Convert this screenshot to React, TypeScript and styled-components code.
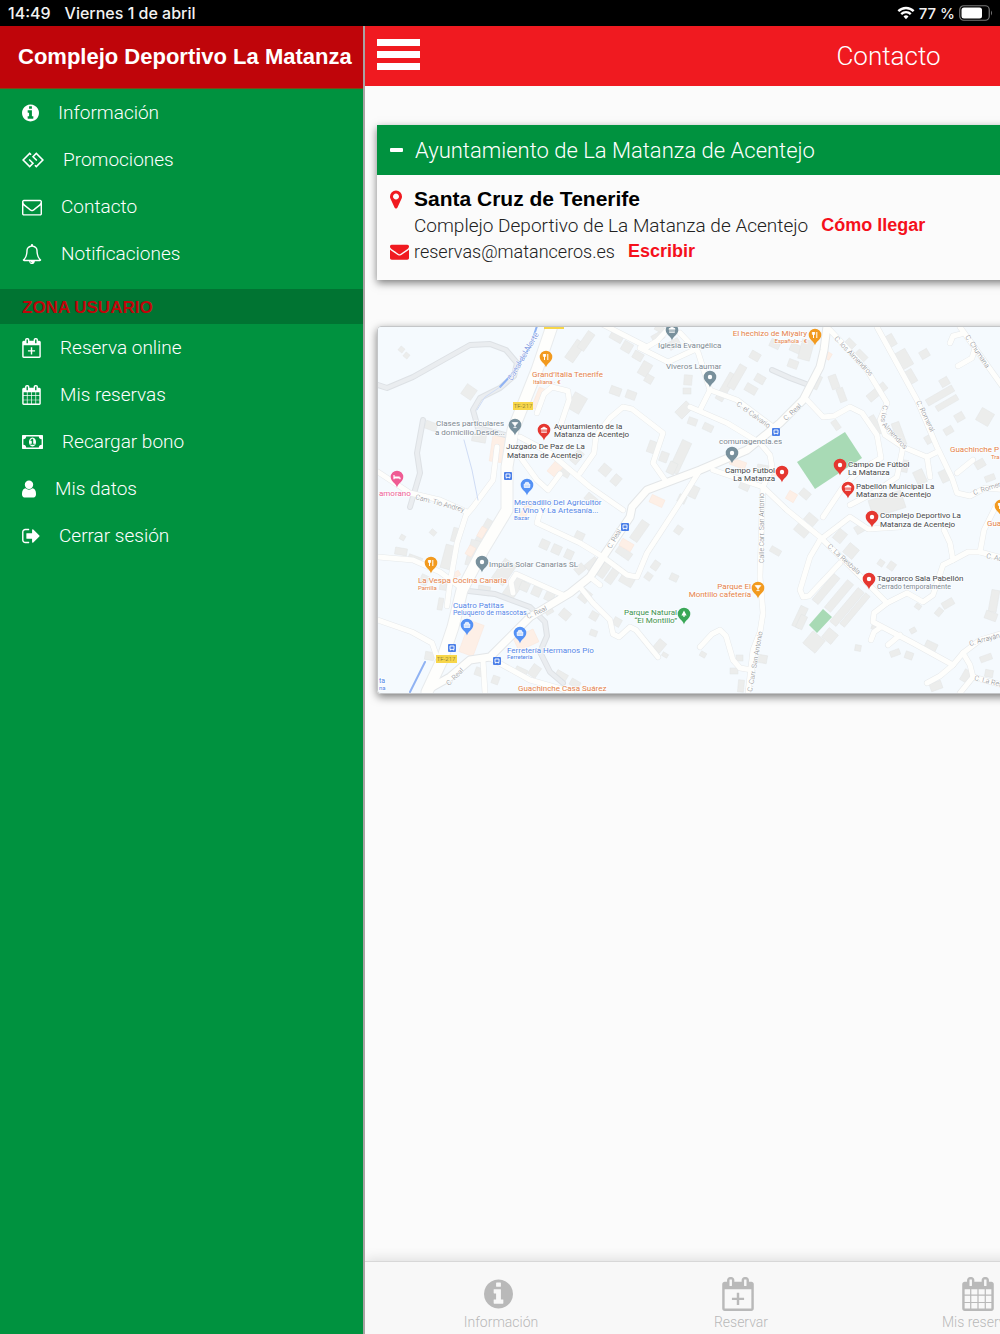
import React from 'react';
import styled, { createGlobalStyle } from 'styled-components';
import { FaGg } from 'react-icons/fa';

const color = {
  red: '#f01a20',
  darkRed: '#bf050a',
  link: '#f5101b',
  green: '#00923f',
  darkGreen: '#007432',
  page: '#fbfbfb',
  tab: '#b9b9b9',
};

const light = 'Roboto, "Liberation Sans", sans-serif';
const bold = '"Liberation Sans", Arial, sans-serif';

const GlobalStyle = createGlobalStyle`
  *, *::before, *::after { box-sizing: border-box; }
  body { margin: 0; background: ${color.page}; font-family: ${light}; font-weight: 300; }
  ul, h1, h2, h3, p { margin: 0; padding: 0; }
  ul { list-style: none; }
  button { border: 0; padding: 0; background: none; font: inherit; color: inherit; cursor: pointer; }
  a { text-decoration: none; color: inherit; }
`;

const Page = styled.div`
  display: flex;
  flex-direction: column;
  min-height: 100vh;
  overflow: hidden;
`;

const StatusBar = styled.div`
  display: flex;
  align-items: center;
  gap: 14px;
  height: 26px;
  padding: 0 7px 0 8px;
  background: #000;
  color: #f2f2f2;
  font-family: Inter, sans-serif;
  font-weight: 500;
  font-size: 16px;
`;

const StatusRight = styled.div`
  display: flex;
  align-items: center;
  gap: 4px;
  margin-left: auto;
  font-size: 15px;
  svg { display: block; }
`;

const Shell = styled.div`
  display: flex;
  flex: 1;
`;

const Sidebar = styled.aside`
  flex: 0 0 365px;
  z-index: 1;
  border-right: 2px solid #a9a3a3;
  background: ${color.green};
  color: #fff;
`;

const Brand = styled.h1`
  display: flex;
  align-items: center;
  height: 63px;
  padding: 0 6px 0 18px;
  border-bottom: 1px solid #7c4a12;
  background: ${color.darkRed};
  font: bold 22px ${bold};
  white-space: nowrap;
`;

const Menu = styled.ul<{ $spaced?: boolean }>`
  padding-bottom: ${p => (p.$spaced ? 12 : 0)}px;
`;

const MenuLink = styled.a`
  display: flex;
  align-items: center;
  gap: 19px;
  height: 47px;
  padding-left: 22px;
  font-size: 19px;
  svg { flex: none; display: block; }
`;

const Zone = styled.h2`
  height: 35px;
  padding: 0 22px;
  background: ${color.darkGreen};
  color: ${color.darkRed};
  font: bold 17px/37px ${bold};
`;

const Main = styled.main`
  display: flex;
  flex-direction: column;
  flex: 0 0 100%;
`;

const TopBar = styled.header`
  display: flex;
  align-items: center;
  height: 60px;
  padding: 0 8px 0 12px;
  background: ${color.red};
  color: #fff;
`;

const Burger = styled.button`
  display: grid;
  gap: 5px;
  width: 43px;
  margin-bottom: 4px;
`;

const Bar = styled.span`
  height: 7px;
  background: #fff;
`;

const ScreenTitle = styled.h2`
  flex: 1;
  text-align: center;
  font-size: 26px;
  font-weight: 300;
`;

const Content = styled.div`
  display: flex;
  flex-direction: column;
  flex: 1;
  gap: 46px;
  padding: 39px 12px;
`;

const Card = styled.section`
  background: ${color.page};
  box-shadow: 0 3px 8px rgba(0, 0, 0, 0.5);
`;

const CardHead = styled.button`
  display: flex;
  align-items: center;
  gap: 12px;
  width: 100%;
  height: 50px;
  padding-left: 13px;
  background: ${color.green};
  color: #fff;
  font-size: 22px;
  text-align: left;
`;

const Minus = styled.span`
  width: 13px;
  height: 4px;
  border-radius: 1px;
  background: #fff;
`;

const CardBody = styled.div`
  display: grid;
  padding: 11px 13px 16px;
  color: #222;
`;

const Line = styled.div<{ $small?: boolean }>`
  display: grid;
  grid-template-columns: 24px auto auto;
  justify-content: start;
  align-items: center;
  height: 26px;
  font-size: ${p => (p.$small ? 18 : 19)}px;
  svg { display: block; }
`;

const Town = styled.h3`
  color: #000;
  font: bold 21px ${bold};
`;

const ActionLink = styled.a`
  margin-left: 13px;
  color: ${color.link};
  font: bold 18px ${bold};
`;

const MapCard = styled.section`
  overflow: hidden;
  border: 1px solid #c4c6c8;
  border-radius: 4px;
  box-shadow: 0 3px 8px rgba(0, 0, 0, 0.5);
  svg { display: block; width: 100%; height: auto; }
`;

const TabBar = styled.nav`
  display: flex;
  height: 73px;
  padding: 0 27px 0 13px;
  border-top: 1px solid #d8d8d8;
  background: #f8f8f8;
  box-shadow: 0 -2px 12px rgba(0, 0, 0, 0.12);
`;

const Tab = styled.a`
  display: flex;
  flex: 1;
  flex-direction: column;
  align-items: center;
  gap: 2px;
  padding-top: 15px;
  color: ${color.tab};
  font-size: 14px;
  line-height: 18px;
  svg { display: block; }
`;

const TabLabel = styled.span`
  padding-left: 6px;
`;

type GlyphName = 'info' | 'mailOpen' | 'bell' | 'plus' | 'calendar' | 'money' | 'user' | 'exit' | 'pin' | 'mail';

const hooks =
  'M576 448v-288q0-13-9.5-22.5t-22.5-9.5h-64q-13 0-22.5 9.5t-9.5 22.5v288q0 13 9.5 22.5t22.5 9.5h64q13 0 22.5-9.5t9.5-22.5zM1344 448v-288q0-13-9.5-22.5t-22.5-9.5h-64q-13 0-22.5 9.5t-9.5 22.5v288q0 13 9.5 22.5t22.5 9.5h64q13 0 22.5-9.5t9.5-22.5zM1728 384v1280q0 52-38 90t-90 38h-1408q-52 0-90-38t-38-90v-1280q0-52 38-90t90-38h128v-96q0-66 47-113t113-47h64q66 0 113 47t47 113v96h384v-96q0-66 47-113t113-47h64q66 0 113 47t47 113v96h128q52 0 90 38t38 90z';

// [left edge, advance width, outline] on a 1792 unit em
const glyphs: Record<GlyphName, [number, number, string]> = {
  info: [128, 1536, 'M1152 1376v-160q0-14-9-23t-23-9h-96v-512q0-14-9-23t-23-9h-320q-14 0-23 9t-9 23v160q0 14 9 23t23 9h96v320h-96q-14 0-23 9t-9 23v160q0 14 9 23t23 9h448q14 0 23-9t9-23zm-128-896v-160q0-14-9-23t-23-9h-192q-14 0-23 9t-9 23v160q0 14 9 23t23 9h192q14 0 23-9t9-23zm640 416q0 209-103 385.5t-279.5 279.5-385.5 103-385.5-103-279.5-279.5-103-385.5 103-385.5 279.5-279.5 385.5-103 385.5 103 279.5 279.5 103 385.5z'],
  mailOpen: [0, 1792, 'M1664 1504v-768q-32 36-69 66-268 206-426 338-51 43-83 67t-86.5 48.5-102.5 24.5h-2q-48 0-102.5-24.5t-86.5-48.5-83-67q-158-132-426-338-37-30-69-66v768q0 13 9.5 22.5t22.5 9.5h1472q13 0 22.5-9.5t9.5-22.5zm0-1051v-24.5l-.5-13-3-12.5-5.5-9-9-7.5-14-2.5h-1472q-13 0-22.5 9.5t-9.5 22.5q0 168 147 284 193 152 401 317 6 5 35 29.5t46 37.5 44.5 31.5 50.5 27.5 43 9h2q20 0 43-9t50.5-27.5 44.5-31.5 46-37.5 35-29.5q208-165 401-317 54-43 100.5-115.5t46.5-131.5zm128-37v1088q0 66-47 113t-113 47h-1472q-66 0-113-47t-47-113v-1088q0-66 47-113t113-47h1472q66 0 113 47t47 113z'],
  bell: [0, 1792, 'M912 1696q0-16-16-16-59 0-101.5-42.5t-42.5-101.5q0-16-16-16t-16 16q0 73 51.5 124.5t124.5 51.5q16 0 16-16zm-666-288h1300q-266-300-266-832 0-51-24-105t-69-103-121.5-80.5-169.5-31.5-169.5 31.5-121.5 80.5-69 103-24 105q0 532-266 832zm1482 0q0 52-38 90t-90 38h-448q0 106-75 181t-181 75-181-75-75-181h-448q-52 0-90-38t-38-90q50-42 91-88t85-119.5 74.5-158.5 50-206 19.5-260q0-152 117-282.5t307-158.5q-8-19-8-39 0-40 28-68t68-28 68 28 28 68q0 20-8 39 190 28 307 158.5t117 282.5q0 139 19.5 260t50 206 74.5 158.5 85 119.5 91 88z'],
  plus: [64, 1664, hooks + 'M192 1664h1408v-1024h-1408zM832 832h128v256h256v128h-256v256h-128v-256h-256v-128h256z'],
  calendar: [64, 1664, hooks + 'M192 1664h288v-288h-288v288zm352 0h320v-288h-320v288zm-352-352h288v-320h-288v320zm352 0h320v-320h-320v320zm-352-384h288v-288h-288v288zm736 736h320v-288h-320v288zm-384-736h320v-288h-320v288zm768 736h288v-288h-288v288zm-384-352h320v-320h-320v320zm384 0h288v-320h-288v320zm-384-384h320v-288h-320v288zm384 0h288v-288h-288v288z'],
  money: [0, 1920, 'M768 1152h384v-96h-128v-448h-114l-148 137 77 80q42-37 55-57h2v288h-128v96zm512-256q0 70-21 142t-59.5 134-101.5 101-138 39-138-39-101.5-101-59.5-134-21-142 21-142 59.5-134 101.5-101 138-39 138 39 101.5 101 59.5 134 21 142zm512 256v-512q-106 0-181-75t-75-181h-1152q0 106-75 181t-181 75v512q106 0 181 75t75 181h1152q0-106 75-181t181-75zm128-832v1152q0 26-19 45t-45 19h-1792q-26 0-45-19t-19-45v-1152q0-26 19-45t45-19h1792q26 0 45 19t19 45z'],
  user: [256, 1280, 'M1536 1399q0 109-62.5 187t-150.5 78h-854q-88 0-150.5-78t-62.5-187q0-85 8.5-160.5t31.5-152 58.5-131 94-89 134.5-34.5q131 128 313 128t313-128q76 0 134.5 34.5t94 89 58.5 131 31.5 152 8.5 160.5zm-256-887q0 159-112.5 271.5t-271.5 112.5-271.5-112.5-112.5-271.5 112.5-271.5 271.5-112.5 271.5 112.5 112.5 271.5z'],
  exit: [64, 1600, 'M704 1440q0 4 1 20t.5 26.5-3 23.5-10 19.5-20.5 6.5h-320q-119 0-203.5-84.5t-84.5-203.5v-704q0-119 84.5-203.5t203.5-84.5h320q13 0 22.5 9.5t9.5 22.5q0 4 1 20t.5 26.5-3 23.5-10 19.5-20.5 6.5h-320q-66 0-113 47t-47 113v704q0 66 47 113t113 47h312l11.5 1 11.5 3 8 5.5 7 9 2 13.5zm928-544q0 26-19 45l-544 544q-19 19-45 19t-45-19-19-45v-288h-448q-26 0-45-19t-19-45v-384q0-26 19-45t45-19h448v-288q0-26 19-45t45-19 45 19l544 544q19 19 19 45z'],
  pin: [384, 1024, 'M1152 640q0-106-75-181t-181-75-181 75-75 181 75 181 181 75 181-75 75-181zm256 0q0 109-33 179l-364 774q-16 33-47.5 52t-67.5 19-67.5-19-46.5-52l-365-774q-33-70-33-179 0-212 150-362t362-150 362 150 150 362z'],
  mail: [0, 1792, 'M1792 710v794q0 66-47 113t-113 47h-1472q-66 0-113-47t-47-113v-794q44 49 101 87 362 246 497 345 57 42 92.5 65.5t94.5 48 110 24.5h2q51 0 110-24.5t94.5-48 92.5-65.5q170-123 498-345 57-39 100-87zm0-294q0 79-49 151t-122 123q-376 261-468 325-10 7-42.5 31t-54 38.5-52 32.5-57.5 27-50 9h-2q-23 0-50-9t-57.5-27-52-32.5-54-38.5-42.5-31q-91-64-262-182.5t-205-142.5q-62-42-117-115.5t-55-136.5q0-78 41.5-130t118.5-52h1472q65 0 112.5 47t47.5 113z'],
};

// glyphs whose body is filled keep a solid silhouette
const solid: GlyphName[] = ['user', 'exit'];

function Glyph({ name, size = 20, fill = 'currentColor' }: { name: GlyphName; size?: number; fill?: string }) {
  const [left, width, d] = glyphs[name];
  return (
    <svg
      width={Math.round((size * width) / 1792)}
      height={size}
      viewBox={`${left} 0 ${width} 1792`}
      fill={fill}
      fillRule={solid.includes(name) ? 'nonzero' : 'evenodd'}
      aria-hidden="true"
    >
      <path d={d} />
    </svg>
  );
}

type Pt = string;
const greyRoads: Pt[] = [
  '378,385 387,388 413,377 470,345 490,344 506,350 517,363 514,376 500,388 480,398 473,410 478,428 513,437',
  '423,420 417,453 420,473 410,507',
  '460,590 495,594 530,607 545,622 547,636 540,652 550,672 563,683',
  '772,370 790,378 806,384',
];
const roads: Pt[] = [
  '378,472 410,493 440,500 467,512 457,543 450,583 447,606',
  '497,447 493,480 473,507 467,514',
  '537,413 544,394 552,387 568,391 569,400 558,433',
  '520,437 550,453 590,487 623,510',
  '513,447 537,480 548,490 560,474',
  '580,473 594,453 596,436 610,418 623,407 632,409 663,433 653,463 667,483',
  '600,323 647,347 657,341 670,327',
  '680,333 698,352 710,390 700,410',
  '640,348 668,362 694,350',
  '710,390 737,400 773,427',
  '690,407 727,423 760,443 770,455 772,467 763,487 762,510 760,577 763,613 760,632 753,650 748,693',
  '700,470 677,507 647,553 637,577 627,575 603,557 580,543 537,523 540,512 550,503',
  '713,470 763,487 787,510 820,537 857,573 887,603 874,613 873,622 913,643 953,665 963,653 980,640 1010,631',
  '820,540 810,557 800,590 803,597 809,596 840,563',
  '820,540 850,517 868,529 900,527',
  '887,603 907,593 923,602 933,595 943,565 953,560 968,552 980,552 1010,560',
  '953,560 950,543 944,530',
  '980,552 984,530 996,506',
  '807,400 823,417 834,416 850,407 862,413 877,435 881,458 860,470 843,487 823,517',
  '830,330 867,370 887,403 880,420 885,435 903,447 927,457 937,452',
  '877,327 917,400 937,447 952,478 957,493 970,496 985,488 1010,490',
  '960,327 1005,390',
  '903,447 897,477 877,491 850,505',
  '927,457 930,477',
  '957,473 973,460',
  '950,343 953,336 961,334',
  '958,366 972,358 975,348',
  '580,587 593,603 610,620 613,634 619,637 630,627 636,630 658,657',
  '700,647 712,634 720,630 726,636 733,660 740,668 752,670',
  '378,557 413,560 440,572 460,587',
  '378,620 412,632 432,643 437,657',
  '513,593 511,582 516,574 563,595',
  '483,660 485,693',
  '490,658 530,680 572,692',
  '590,577 600,585',
  '953,665 940,676 927,683',
  '963,653 970,665 973,677 960,693',
  '973,677 1010,687',
  '881,627 874,632 871,640',
  '900,635 888,645',
];
const mainRoads: Pt[] = [
  '427,690 450,677 470,660 490,657 530,617 570,593 590,577 603,557 630,517 632,507 647,490 700,470 747,450 780,423 803,400 820,367 824,350 827,326',
];
const highway = '552,326 537,370 513,430 507,467 507,510 483,550 462,590 453,627 442,660 427,692';

// [x, y, width, height, rotation]
const buildings: number[][] = [
  [463, 386, 12, 12, 35], [399, 347, 5, 5, 40], [404, 353, 5, 5, 40], [425, 422, 12, 8, 20], [472, 434, 14, 8, 10],
  [568, 396, 18, 14, -60], [570, 340, 10, 22, 35], [582, 331, 8, 20, 35], [555, 465, 16, 10, 30], [573, 450, 8, 14, 40],
  [610, 333, 13, 8, 30], [622, 342, 10, 10, 30], [633, 352, 10, 8, 30], [640, 362, 10, 14, 30], [645, 375, 8, 8, 30],
  [610, 387, 11, 8, 20], [626, 391, 10, 8, 20], [652, 333, 12, 8, -30], [668, 340, 12, 8, -30], [655, 326, 10, 6, 30],
  [684, 375, 8, 10, 5], [683, 388, 8, 6, 0], [676, 405, 16, 10, -45], [688, 418, 9, 7, 20], [703, 424, 10, 7, 25],
  [722, 372, 8, 30, 30], [733, 364, 8, 26, 30], [750, 352, 10, 8, 30], [770, 340, 10, 8, 25], [790, 345, 14, 8, 25],
  [745, 385, 12, 8, 30], [755, 375, 10, 8, 30], [675, 440, 10, 34, 25], [668, 462, 8, 12, 25], [648, 441, 8, 12, 20],
  [660, 452, 8, 10, 20], [600, 465, 10, 10, 40], [612, 475, 8, 10, 40], [585, 495, 12, 8, 40], [690, 486, 8, 12, 25],
  [678, 495, 8, 8, 25], [740, 480, 10, 10, 25], [757, 465, 12, 8, 10], [800, 340, 12, 20, 15], [788, 360, 10, 8, 20],
  [812, 375, 8, 14, 25], [845, 340, 10, 8, 45], [855, 352, 12, 8, 45], [830, 375, 8, 14, -20], [838, 388, 7, 14, -20],
  [866, 388, 22, 8, -40], [898, 350, 12, 18, -30], [905, 370, 10, 14, -30], [885, 335, 10, 12, -30], [925, 392, 30, 7, -30],
  [935, 400, 24, 6, -30], [920, 350, 9, 8, -30], [940, 378, 9, 8, -30], [944, 427, 9, 7, -30], [955, 413, 9, 8, -30],
  [978, 410, 14, 14, 30], [833, 420, 6, 10, -35], [872, 415, 7, 20, -30], [895, 422, 8, 24, -20], [900, 460, 8, 12, 10],
  [915, 470, 10, 14, -25], [925, 435, 9, 8, -30], [940, 470, 9, 12, -25], [975, 460, 10, 8, -30], [985, 475, 10, 6, -20],
  [800, 490, 10, 8, 40], [870, 495, 34, 18, -18], [795, 525, 14, 10, 40], [805, 515, 12, 9, 40], [835, 530, 10, 12, 40],
  [845, 545, 12, 12, 40], [855, 525, 9, 8, -30], [878, 560, 6, 6, 35], [888, 562, 7, 8, 35], [822, 572, 8, 34, 40],
  [835, 578, 8, 36, 40], [843, 585, 8, 44, 40], [852, 590, 6, 40, 40], [796, 606, 8, 22, 25], [806, 634, 16, 16, 40],
  [824, 630, 12, 12, 40], [915, 604, 6, 5, 35], [936, 608, 6, 8, 40], [910, 628, 6, 5, -30], [942, 600, 12, 7, -30],
  [855, 645, 6, 6, 10], [872, 622, 7, 8, 20], [890, 650, 10, 6, -20], [905, 652, 8, 7, 20], [925, 642, 12, 8, 25],
  [930, 682, 12, 8, -20], [962, 670, 8, 12, 30], [980, 655, 12, 6, -20], [985, 670, 8, 7, 10], [990, 590, 8, 22, 10],
  [985, 612, 12, 8, 20], [480, 520, 14, 26, 30], [468, 540, 10, 26, 15], [443, 545, 10, 24, 15], [452, 528, 8, 14, 15],
  [430, 530, 6, 5, 40], [395, 548, 12, 7, 10], [408, 556, 14, 7, 20], [420, 575, 8, 10, 25], [440, 580, 7, 10, 10],
  [438, 598, 5, 12, 10], [497, 560, 14, 24, 35], [508, 575, 12, 24, 35], [478, 586, 12, 9, 10], [520, 582, 9, 9, 25],
  [532, 587, 9, 9, 25], [545, 592, 9, 9, 25], [540, 540, 9, 9, 25], [552, 545, 9, 9, 25], [565, 550, 8, 9, 25],
  [575, 532, 9, 8, 25], [585, 560, 14, 8, -40], [575, 565, 10, 8, -40], [560, 610, 10, 9, 40], [545, 608, 8, 6, -30],
  [580, 590, 10, 12, 40], [600, 562, 8, 16, 35], [608, 568, 8, 16, 35], [620, 575, 14, 10, 30], [616, 549, 16, 8, 35],
  [635, 520, 9, 22, 35], [652, 561, 7, 9, 35], [645, 573, 7, 7, 35], [670, 574, 8, 7, 25], [675, 526, 7, 8, 35],
  [590, 612, 8, 8, 30], [613, 618, 8, 8, 30], [590, 630, 7, 6, 20], [655, 640, 9, 12, 40], [662, 653, 6, 4, 30],
  [770, 548, 11, 6, 30], [798, 615, 7, 14, 25], [758, 655, 9, 8, 10], [736, 655, 7, 6, 0], [730, 668, 8, 6, 0],
  [738, 680, 6, 12, 5], [700, 652, 6, 5, 30], [475, 668, 9, 8, 20], [492, 676, 7, 8, 20], [515, 668, 12, 7, 25],
  [530, 665, 9, 12, 35], [555, 672, 12, 9, 30], [570, 680, 10, 7, 30], [425, 652, 9, 8, 10], [400, 535, 5, 5, 30],
];
const peach: number[][] = [
  [535, 388, 9, 22, 22], [491, 436, 13, 26, 8], [551, 460, 10, 16, 40], [479, 527, 6, 11, 30], [467, 546, 7, 10, 30],
  [464, 622, 15, 33, 20], [515, 633, 22, 14, -25], [620, 541, 13, 8, 30], [650, 497, 14, 8, 25], [730, 460, 16, 7, 20],
  [787, 492, 9, 9, 30], [771, 470, 8, 6, 0], [824, 352, 7, 7, 30], [523, 500, 6, 20, 30], [452, 572, 8, 5, -30],
];

const ink = { dark: '#45484b', grey: '#7c8993', orange: '#e5824a', blue: '#5587e8', pink: '#ee5f97', green: '#3d9350' };
type Ink = keyof typeof ink;
// [x, baseline, text, colour, size, anchor]
const places: [number, number, string, Ink, number?, 'end'?][] = [
  [532, 377, 'Grand’Italia Tenerife', 'orange'], [533, 384, 'Italiana · €', 'orange', 6],
  [658, 348, 'Iglesia Evangélica', 'grey'], [666, 369, 'Viveros Laumar', 'grey'],
  [807, 336, 'El hechizo de Miyairy', 'orange', 8, 'end'], [807, 343, 'Española · €', 'orange', 6, 'end'],
  [436, 426, 'Clases particulares', 'grey'], [435, 435, 'a domicilio.Desde...', 'grey'],
  [554, 429, 'Ayuntamiento de la', 'dark'], [554, 437, 'Matanza de Acentejo', 'dark'],
  [506, 449, 'Juzgado De Paz de La', 'dark'], [507, 458, 'Matanza de Acentejo', 'dark'],
  [514, 505, 'Mercadillo Del Agricultor', 'blue'], [514, 513, 'El Vino Y La Artesanía...', 'blue'], [514, 520, 'Bazar', 'blue', 6],
  [379, 496, 'amorano', 'pink'], [719, 444, 'comunagencia.es', 'grey'],
  [775, 473, 'Campo Futbol', 'dark', 8, 'end'], [775, 481, 'La Matanza', 'dark', 8, 'end'],
  [848, 467, 'Campo De Fútbol', 'dark'], [848, 475, 'La Matanza', 'dark'],
  [856, 489, 'Pabellón Municipal La', 'dark'], [856, 497, 'Matanza de Acentejo', 'dark'],
  [880, 518, 'Complejo Deportivo La', 'dark'], [880, 527, 'Matanza de Acentejo', 'dark'],
  [877, 581, 'Tagorarco Sala Pabellón', 'dark'], [877, 589, 'Cerrado temporalmente', 'grey', 7],
  [950, 452, 'Guachinche P', 'orange'], [991, 459, 'Tra', 'orange', 6], [987, 526, 'Gua', 'orange'],
  [489, 567, 'Impuls Solar Canarias SL', 'grey'], [418, 583, 'La Vespa Cocina Canaria', 'orange'], [418, 590, 'Parrilla', 'orange', 6],
  [453, 608, 'Cuatro Patitas', 'blue'], [453, 615, 'Peluquero de mascotas', 'blue', 7],
  [507, 653, 'Ferretería Hermanos Pío', 'blue'], [507, 659, 'Ferretería', 'blue', 6], [518, 691, 'Guachinche Casa Suárez', 'orange'],
  [677, 615, 'Parque Natural', 'green', 8, 'end'], [677, 623, '“El Montillo”', 'green', 8, 'end'],
  [751, 589, 'Parque El', 'orange', 8, 'end'], [751, 597, 'Montillo cafetería', 'orange', 8, 'end'],
  [379, 683, 'ta', 'blue', 7], [379, 690, 'na', 'blue', 6],
];
// [x, y, rotation, text]
const streets: [number, number, number, string][] = [
  [415, 499, 15, 'Cam. Tio Andrey'], [736, 405, 36, 'C. el Calvario'], [786, 421, -42, 'C. Real'], [834, 339, 46, 'C. los Almendros'],
  [883, 405, 97, 'C. los'], [882, 425, 48, 'Almendros'], [965, 337, 56, 'C. Chumana'], [916, 402, 64, 'C. Romeral'],
  [974, 495, -18, 'C. Romeral'], [827, 547, 42, 'C. La Resbala'], [970, 646, -16, 'C. Arrayán'], [974, 680, 14, 'C. La Resbala'],
  [986, 558, 12, 'C. Ac'], [764, 563, -90, 'Calle Carr. San Antonio'], [752, 692, -80, 'C. Carr. San Antonio'],
  [611, 549, -60, 'C. Real'], [528, 619, -25, 'C. Real'], [449, 686, -45, 'C. Real'],
];
type Mark = 'dot' | 'food' | 'bank' | 'bag' | 'bed' | 'tree' | 'cup';
const pins: [number, number, string, Mark][] = [
  [546, 357, '#f29a1f', 'food'], [815, 335, '#f29a1f', 'food'], [431, 563, '#f29a1f', 'food'], [1001, 506, '#f29a1f', 'food'],
  [672, 330, '#78909c', 'bank'], [710, 377, '#78909c', 'dot'], [515, 425, '#78909c', 'cup'], [732, 453, '#78909c', 'dot'],
  [482, 562, '#78909c', 'dot'], [544, 430, '#e53730', 'bank'], [782, 472, '#e53730', 'dot'], [840, 465, '#e53730', 'dot'],
  [848, 488, '#e53730', 'bank'], [872, 517, '#e53730', 'dot'], [869, 579, '#e53730', 'dot'], [527, 485, '#5491f5', 'bag'],
  [467, 625, '#5491f5', 'bag'], [520, 633, '#5491f5', 'bag'], [397, 477, '#ef5b93', 'bed'], [684, 614, '#3aa757', 'tree'],
  [758, 588, '#f29a1f', 'cup'],
];
const stops: [number, number][] = [[508, 476], [776, 432], [625, 527], [452, 648], [497, 661]];
const marks: Record<Mark, React.ReactNode> = {
  dot: <circle r="2.2" fill="#fff" />,
  food: <path d="M-1.5-3v6M-2.6-3v2.4h2.2V-3M1.8 3v-6" stroke="#fff" strokeWidth="1" fill="none" />,
  bank: <path d="M-3.2-1L0-3l3.2 2zM-2.8 2.4h5.6M-2 2v-3M0 2v-3M2 2v-3" stroke="#fff" strokeWidth=".8" fill="#fff" />,
  bag: <path d="M-2.8-1h5.6v3.4h-5.6zM-1.4-1v-1.6h2.8v1.6" stroke="#fff" strokeWidth=".8" fill="#fff" fillOpacity=".7" />,
  bed: <path d="M-3-2v4.2M-3 1h6v1.2M-2.5 0h5.2" stroke="#fff" strokeWidth="1.2" fill="none" />,
  tree: <path d="M0-3.6L2.6 1.4H.6V3H-.6V1.4h-2z" fill="#fff" />,
  cup: <path d="M-2.8-2.4h5.6L0 .8zM0 0v2.6M-1.6 2.6h3.2" stroke="#fff" strokeWidth=".8" fill="#fff" />,
};

const quads = (list: number[][], fill: string, stroke: string) => (
  <g fill={fill} stroke={stroke} strokeWidth=".5">
    {list.map(([x, y, w, h, r], i) => (
      <rect key={i} x={x} y={y} width={w} height={h} transform={`rotate(${r} ${x + w / 2} ${y + h / 2})`} />
    ))}
  </g>
);
const lines = (list: Pt[], stroke: string, width: number) => (
  <g fill="none" stroke={stroke} strokeWidth={width} strokeLinejoin="round" strokeLinecap="round">
    {list.map(p => <polyline key={p} points={p} />)}
  </g>
);

function TownMap() {
  return (
    <svg viewBox="378 327 974 366" role="img" aria-label="Mapa de La Matanza de Acentejo" fontFamily="Roboto, sans-serif">
      <rect x="378" y="326" width="976" height="368" fill="#f5fafe" />
      {quads(buildings, '#ecedec', '#e3e5e5')}
      {quads(peach, '#fdefe6', '#fae6da')}
      <g fill="#a8dab5">
        <polygon points="797,462 845,432 862,458 815,489" />
        <polygon points="823,609 832,617 817,633 809,625" />
      </g>
      {lines(greyRoads, '#dde1e5', 6)}
      {lines(greyRoads, '#eaedf0', 4)}
      {lines(roads, '#e6e9eb', 6)}
      {lines(mainRoads, '#e3e6e8', 9)}
      {lines([highway], '#e8ebed', 13)}
      {lines(roads, '#fefefc', 5)}
      {lines(mainRoads, '#fefefc', 7)}
      {lines([highway], '#fefefc', 11)}
      {lines(['537,326 530,347 513,373 500,387', '425,662 418,676 410,692'], '#8fb2f3', 2)}
      {lines(['500,387 485,397 477,410', '464,440 472,470 478,500'], '#cfdcf5', 1)}
      <g fill="#f7d64a">
        <rect x="544" y="326" width="20" height="3" />
        <rect x="513" y="402" width="20" height="8" />
        <rect x="436" y="655" width="21" height="8" />
      </g>
      <g fill="#6b6330" fontSize="6" textAnchor="middle">
        <text x="523" y="408">TF-217</text>
        <text x="446" y="661">TF-217</text>
      </g>
      <g fontSize="7" fill="#7f8589" stroke="#fff" strokeWidth="1" paintOrder="stroke">
        {streets.map(([x, y, r, t]) => <text key={`${x}-${y}`} transform={`translate(${x} ${y}) rotate(${r})`}>{t}</text>)}
        <text fill="#5b80d8" fontSize="8" transform="translate(512 381) rotate(-60)">Canal del Norte</text>
      </g>
      <g fontWeight="400" stroke="#fff" strokeOpacity=".8" strokeWidth="1.5" paintOrder="stroke">
        {places.map(([x, y, t, c, size = 8, anchor]) => (
          <text key={`${x}-${y}`} x={x} y={y} fill={ink[c]} fontSize={size} textAnchor={anchor}>{t}</text>
        ))}
      </g>
      {stops.map(([x, y]) => (
        <g key={x} transform={`translate(${x} ${y})`}>
          <rect x="-4" y="-4" width="8" height="8" rx="1" fill="#4b7fe8" />
          <path d="M-2-2h4v3.4h-4zM-1.6 1.4v1M1.6 1.4v1" fill="none" stroke="#fff" strokeWidth=".9" />
        </g>
      ))}
      {pins.map(([x, y, fill, mark]) => (
        <g key={`${x}-${y}`} transform={`translate(${x} ${y})`}>
          <path d="M0 10.500C-.8 6.500-6.300 4.500-6.300 0a6.300 6.300 0 0 1 12.600 0C6.300 4.500.8 6.500 0 10.500z" fill={fill} />
          {marks[mark]}
        </g>
      ))}
    </svg>
  );
}

const mainMenu: [string, React.ReactNode][] = [
  ['Información', <Glyph name="info" />],
  ['Promociones', <FaGg size={22} aria-hidden="true" />],
  ['Contacto', <Glyph name="mailOpen" />],
  ['Notificaciones', <Glyph name="bell" />],
];
const userMenu: [string, React.ReactNode][] = [
  ['Reserva online', <Glyph name="plus" />],
  ['Mis reservas', <Glyph name="calendar" />],
  ['Recargar bono', <Glyph name="money" />],
  ['Mis datos', <Glyph name="user" />],
  ['Cerrar sesión', <Glyph name="exit" />],
];
const tabs: [string, GlyphName][] = [['Información', 'info'], ['Reservar', 'plus'], ['Mis reservas', 'calendar'], ['Contacto', 'mail']];

function MenuList({ items, spaced }: { items: [string, React.ReactNode][]; spaced?: boolean }) {
  return (
    <Menu $spaced={spaced}>
      {items.map(([label, icon]) => (
        <li key={label}><MenuLink href="#">{icon}{label}</MenuLink></li>
      ))}
    </Menu>
  );
}

export default function App() {
  const [open, setOpen] = React.useState(true);
  return (
    <Page>
      <GlobalStyle />
      <StatusBar>
        <span>14:49</span>
        <span>Viernes 1 de abril</span>
        <StatusRight>
          <svg width="18" height="14" viewBox="0 0 20 15" fill="none" stroke="#fff" strokeWidth="2.600" aria-hidden="true">
            <path d="M1.500 5.500a12 12 0 0 1 17 0M4.700 8.700a7.500 7.500 0 0 1 10.600 0" />
            <path d="M10 14.500L7.200 11.500a4 4 0 0 1 5.600 0z" fill="#fff" stroke="none" />
          </svg>
          <span>77 %</span>
          <svg width="34" height="16" viewBox="0 0 34 16" aria-hidden="true">
            <rect x=".75" y=".75" width="29.500" height="14.500" rx="4" fill="none" stroke="#777" strokeWidth="1.200" />
            <rect x="2.500" y="2.500" width="20.500" height="11" rx="2.500" fill="#fff" />
            <path d="M32 5.500q2 2.500 0 5z" fill="#777" />
          </svg>
        </StatusRight>
      </StatusBar>
      <Shell>
        <Sidebar>
          <Brand>Complejo Deportivo La Matanza</Brand>
          <MenuList items={mainMenu} spaced />
          <Zone>ZONA USUARIO</Zone>
          <MenuList items={userMenu} />
        </Sidebar>
        <Main>
          <TopBar>
            <Burger aria-label="Menú"><Bar /><Bar /><Bar /></Burger>
            <ScreenTitle>Contacto</ScreenTitle>
          </TopBar>
          <Content>
            <Card>
              <CardHead aria-expanded={open} onClick={() => setOpen(!open)}>
                <Minus />
                Ayuntamiento de La Matanza de Acentejo
              </CardHead>
              {open && (
                <CardBody>
                  <Line><Glyph name="pin" size={21} fill={color.red} /><Town>Santa Cruz de Tenerife</Town></Line>
                  <Line><span /><span>Complejo Deportivo de La Matanza de Acentejo</span><ActionLink href="#">Cómo llegar</ActionLink></Line>
                  <Line $small><Glyph name="mail" size={19} fill={color.red} /><span>reservas@matanceros.es</span><ActionLink href="#">Escribir</ActionLink></Line>
                </CardBody>
              )}
            </Card>
            <MapCard><TownMap /></MapCard>
          </Content>
          <TabBar>
            {tabs.map(([label, icon]) => (
              <Tab href="#" key={label}><Glyph name={icon} size={34} /><TabLabel>{label}</TabLabel></Tab>
            ))}
          </TabBar>
        </Main>
      </Shell>
    </Page>
  );
}
